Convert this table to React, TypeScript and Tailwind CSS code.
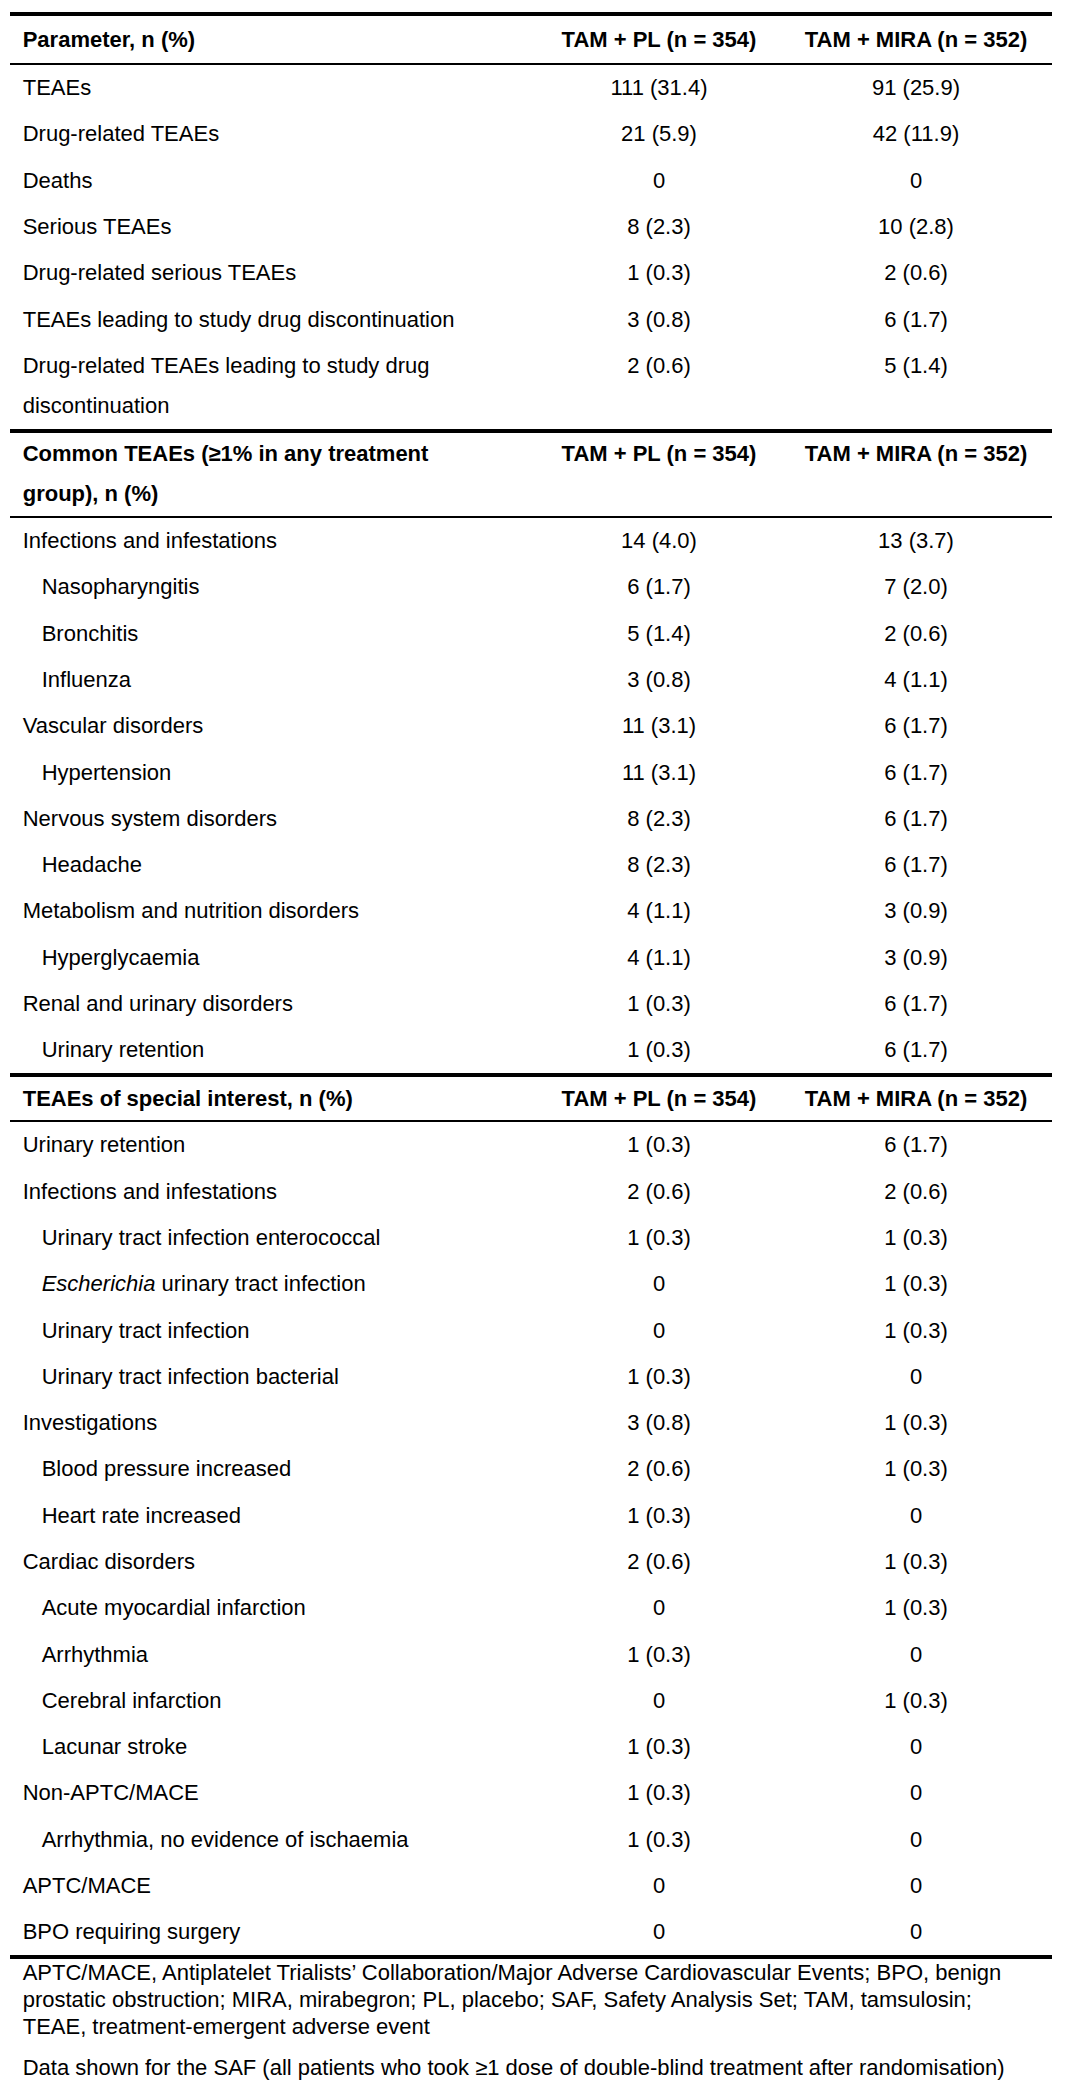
type Row = { label: React.ReactNode; pl: string; mira: string; indent?: boolean };

const cols = "grid grid-cols-[528px_242px_272px]";

const overall: Row[] = [
  { label: "TEAEs", pl: "111 (31.4)", mira: "91 (25.9)" },
  { label: "Drug-related TEAEs", pl: "21 (5.9)", mira: "42 (11.9)" },
  { label: "Deaths", pl: "0", mira: "0" },
  { label: "Serious TEAEs", pl: "8 (2.3)", mira: "10 (2.8)" },
  { label: "Drug-related serious TEAEs", pl: "1 (0.3)", mira: "2 (0.6)" },
  { label: "TEAEs leading to study drug discontinuation", pl: "3 (0.8)", mira: "6 (1.7)" },
  { label: "Drug-related TEAEs leading to study drug discontinuation", pl: "2 (0.6)", mira: "5 (1.4)" },
];

const common: Row[] = [
  { label: "Infections and infestations", pl: "14 (4.0)", mira: "13 (3.7)" },
  { label: "Nasopharyngitis", pl: "6 (1.7)", mira: "7 (2.0)", indent: true },
  { label: "Bronchitis", pl: "5 (1.4)", mira: "2 (0.6)", indent: true },
  { label: "Influenza", pl: "3 (0.8)", mira: "4 (1.1)", indent: true },
  { label: "Vascular disorders", pl: "11 (3.1)", mira: "6 (1.7)" },
  { label: "Hypertension", pl: "11 (3.1)", mira: "6 (1.7)", indent: true },
  { label: "Nervous system disorders", pl: "8 (2.3)", mira: "6 (1.7)" },
  { label: "Headache", pl: "8 (2.3)", mira: "6 (1.7)", indent: true },
  { label: "Metabolism and nutrition disorders", pl: "4 (1.1)", mira: "3 (0.9)" },
  { label: "Hyperglycaemia", pl: "4 (1.1)", mira: "3 (0.9)", indent: true },
  { label: "Renal and urinary disorders", pl: "1 (0.3)", mira: "6 (1.7)" },
  { label: "Urinary retention", pl: "1 (0.3)", mira: "6 (1.7)", indent: true },
];

const special: Row[] = [
  { label: "Urinary retention", pl: "1 (0.3)", mira: "6 (1.7)" },
  { label: "Infections and infestations", pl: "2 (0.6)", mira: "2 (0.6)" },
  { label: "Urinary tract infection enterococcal", pl: "1 (0.3)", mira: "1 (0.3)", indent: true },
  {
    label: (
      <>
        <i>Escherichia</i> urinary tract infection
      </>
    ),
    pl: "0",
    mira: "1 (0.3)",
    indent: true,
  },
  { label: "Urinary tract infection", pl: "0", mira: "1 (0.3)", indent: true },
  { label: "Urinary tract infection bacterial", pl: "1 (0.3)", mira: "0", indent: true },
  { label: "Investigations", pl: "3 (0.8)", mira: "1 (0.3)" },
  { label: "Blood pressure increased", pl: "2 (0.6)", mira: "1 (0.3)", indent: true },
  { label: "Heart rate increased", pl: "1 (0.3)", mira: "0", indent: true },
  { label: "Cardiac disorders", pl: "2 (0.6)", mira: "1 (0.3)" },
  { label: "Acute myocardial infarction", pl: "0", mira: "1 (0.3)", indent: true },
  { label: "Arrhythmia", pl: "1 (0.3)", mira: "0", indent: true },
  { label: "Cerebral infarction", pl: "0", mira: "1 (0.3)", indent: true },
  { label: "Lacunar stroke", pl: "1 (0.3)", mira: "0", indent: true },
  { label: "Non-APTC/MACE", pl: "1 (0.3)", mira: "0" },
  { label: "Arrhythmia, no evidence of ischaemia", pl: "1 (0.3)", mira: "0", indent: true },
  { label: "APTC/MACE", pl: "0", mira: "0" },
  { label: "BPO requiring surgery", pl: "0", mira: "0" },
];

function Header({ title, pad }: { title: string; pad: string }) {
  return (
    <div className={`${cols} ${pad} border-t-4 border-b-2 border-black font-bold leading-[40px]`}>
      <div className="pl-[12.7px] pr-[40px]">{title}</div>
      <div className="text-center">TAM + PL (n = 354)</div>
      <div className="text-center">TAM + MIRA (n = 352)</div>
    </div>
  );
}

function Body({ rows }: { rows: Row[] }) {
  return (
    <div>
      {rows.map((r, i) => (
        <div key={i} className={`${cols} py-[3.15px] leading-[40px]`}>
          <div className={r.indent ? "pl-[31.7px] pr-[40px]" : "pl-[12.7px] pr-[40px]"}>{r.label}</div>
          <div className="text-center">{r.pl}</div>
          <div className="text-center">{r.mira}</div>
        </div>
      ))}
    </div>
  );
}

export default function App() {
  return (
    <div className="min-h-screen bg-white pt-[12px] font-['Liberation_Sans',Arial,sans-serif] text-[22px] text-black">
      <div className="mx-[10px] w-[1042px]">
        <Header title="Parameter, n (%)" pad="py-[3.5px]" />
        <Body rows={overall} />
        <Header title="Common TEAEs (≥1% in any treatment group), n (%)" pad="py-[1.5px]" />
        <Body rows={common} />
        <Header title="TEAEs of special interest, n (%)" pad="py-[1.5px]" />
        <Body rows={special} />
        <div className="border-t-4 border-black pl-[12.7px] leading-[27px]">
          <p>
            APTC/MACE, Antiplatelet Trialists’ Collaboration/Major Adverse Cardiovascular Events; BPO, benign
            <br />
            prostatic obstruction; MIRA, mirabegron; PL, placebo; SAF, Safety Analysis Set; TAM, tamsulosin;
            <br />
            TEAE, treatment-emergent adverse event
          </p>
          <p className="mt-[14px]">
            Data shown for the SAF (all patients who took ≥1 dose of double-blind treatment after randomisation)
          </p>
        </div>
      </div>
    </div>
  );
}
